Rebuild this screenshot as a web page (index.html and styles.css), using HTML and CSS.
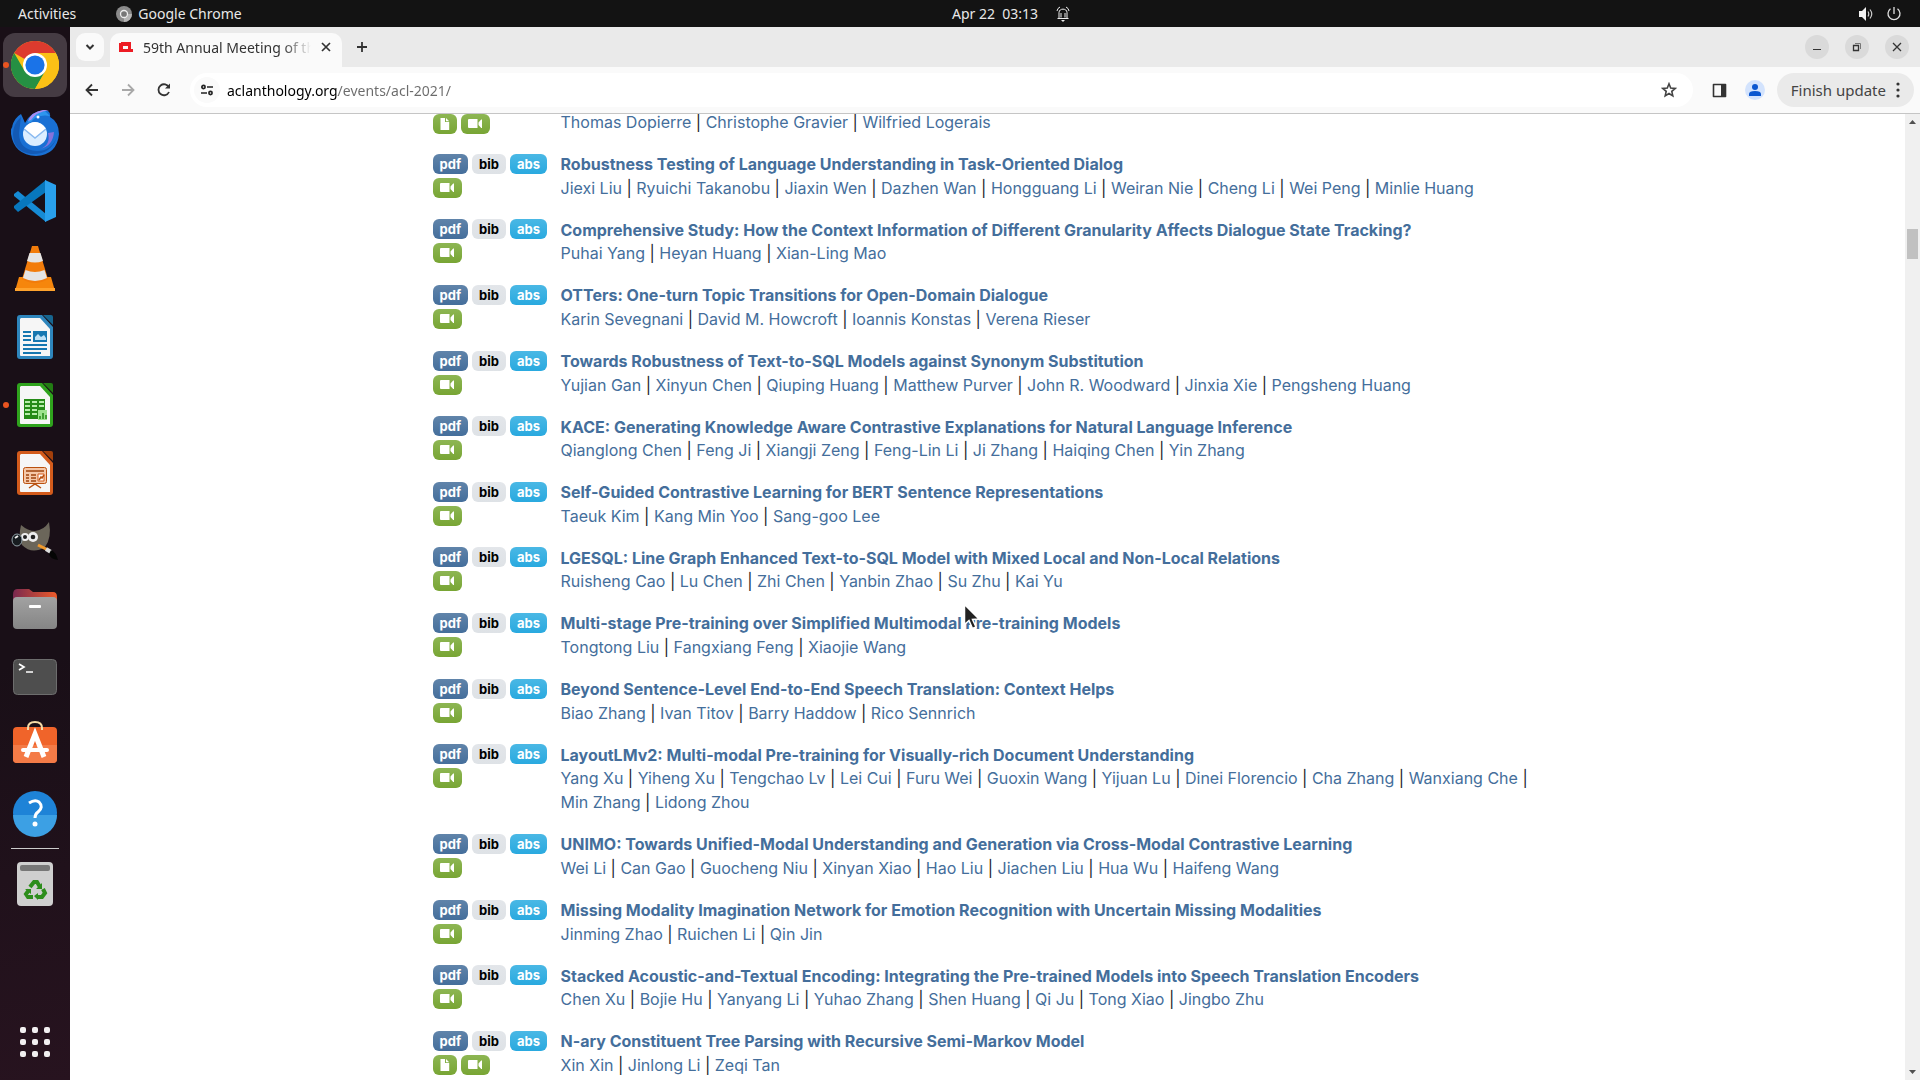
FILE: index.html
```
<!DOCTYPE html>
<html lang="en">
<head>
    <meta charset="UTF-8">
    <meta name="viewport" content="width=device-width, initial-scale=1.0">
    <title>59th Annual Meeting of the Association for Computational Linguistics</title>
    <link rel="stylesheet" href="styles.css">
</head>
<body>
    <!-- shared badge icons -->
    <svg class="defs" aria-hidden="true">
        <symbol id="i-video" viewBox="0 0 15 12">
            <path fill="#fff" d="M1 1h8.500v9H1q-1 0-1-1V2q0-1 1-1zM10.500 4.500l2.700-3h.8v8.500h-.8L10.500 7z"/>
        </symbol>
        <symbol id="i-file" viewBox="0 0 10 12">
            <path fill="#fff" d="M.5 0H5v4h4.200v8H.5zM6 0l3.200 3.200H6z"/>
        </symbol>
    </svg>

    <header class="topbar">
        <div class="topbar-left">
            <span>Activities</span>
            <span class="app-name">
                <svg width="16" height="16" viewBox="0 0 16 16"><circle cx="8" cy="8" r="8" fill="#8b8b8b"/><path d="M8 8h8A8 8 0 0 1 8 16z" fill="#b5b5b5"/><circle cx="8" cy="8" r="3.500" fill="#777" stroke="#eee" stroke-width="1.300"/></svg>
                Google Chrome
            </span>
        </div>
        <div class="topbar-clock">
            <span>Apr 22&nbsp; 03:13</span>
            <svg width="14" height="16" viewBox="0 0 14 16" fill="none" stroke="#eee"><path d="M1.500 12.500h11M3 12V6.500C3 2 11 2 11 6.500V12M5 11.500V7M9 11.500V7M1 5Q1.500 2 4 1M13 5Q12.500 2 10 1"/><path d="M5 14h4l-2 2z" fill="#eee" stroke="none"/></svg>
        </div>
        <div class="topbar-tray">
            <svg width="16" height="16" viewBox="0 0 16 16"><path fill="#f2f2f2" d="M1 5h3l4-4v14l-4-4H1z"/><path fill="none" stroke="#ccc" stroke-width="1.200" d="M10 5.500Q11.500 8 10 10.500M12 3.500Q15.500 8 12 12.500"/></svg>
            <svg width="16" height="16" viewBox="0 0 16 16" fill="none" stroke="#e0e0e0" stroke-width="1.300"><path d="M8 1v7M4.500 2.800a6 6 0 1 0 7 0"/></svg>
        </div>
    </header>

    <div class="desktop">
        <nav class="dock">
            <div class="dock-item active running">
                <svg width="48" height="48" viewBox="0 0 48 48"><circle cx="24" cy="24" r="24" fill="#fbc116"/><path d="M24 24L3.200 12A24 24 0 0 1 44.800 12z" fill="#dd3b2e"/><path d="M24 24L44.800 12H24z" fill="#dd3b2e"/><path d="M3.200 12A24 24 0 0 0 24 48L34.400 30 24 24 13.600 30z" fill="#259043"/><path d="M24 12h20.800A24 24 0 0 1 24 48l10.400-18z" fill="#fbc116"/><circle cx="24" cy="24" r="12" fill="#fff"/><circle cx="24" cy="24" r="9.600" fill="#1a73e8"/></svg>
            </div>
            <div class="dock-item">
                <svg width="48" height="48" viewBox="0 0 48 48"><path d="M1 18Q3 9 10 5Q12 9 14 14Q20 2 34 1Q40 2 39 8Q48 13 48 25Q46 46 25 47Q3 46 0 25Q-1 20 2 17z" fill="#1970d4"/><path d="M2 25Q2 42 20 45Q40 46 46 28Q40 42 26 42Q8 41 8 24L10 8Q2 15 2 25z" fill="#135ab5"/><path d="M16 14Q20 3 34 2L39 7Q26 5 20 13z" fill="#2d96ee"/><path d="M17 12Q20 3 32 1H38Q25 3 20 11z" fill="#a88df0"/><path d="M37 24Q40 36 29 40Q42 37 43 23z" fill="#8573dc"/><ellipse cx="24" cy="25" rx="12" ry="12" fill="#dceeff"/><path d="M13 20l11 9 11-9Q30 13 24 13T13 20z" fill="#fff"/><path d="M13 20l11 9 11-9" fill="none" stroke="#8abaf0" stroke-width="1.500"/><circle cx="27" cy="8" r="1.500" fill="#fff"/></svg>
            </div>
            <div class="dock-item">
                <svg width="48" height="48" viewBox="0 0 48 48"><path d="M3 17l4-3 28 23v8L3 19z" fill="#168bd5"/><path d="M3 31l4 4L35 15V3L3 29z" fill="#0877bd"/><path d="M34 3l11 5v32l-11 5z" fill="#29a0ec"/></svg>
            </div>
            <div class="dock-item">
                <svg width="48" height="48" viewBox="0 0 48 48"><path d="M8 32h32l4 14H4z" fill="#f6860c"/><path d="M4 43h40v3H4z" fill="#ffa32d"/><path d="M21 1h6l10 33q-13 8-26 0z" fill="#f27c0b"/><path d="M18.500 8h11l2.500 8q-8 3-16 0zM14.500 25q9.500 4 19 0l2.500 8q-12 6-24 0z" fill="#e5e5e5"/></svg>
            </div>
            <div class="dock-item">
                <svg width="48" height="48" viewBox="0 0 48 48"><path d="M9 2h22l11 12v29q0 3-3 3H9q-3 0-3-3V5q0-3 3-3z" fill="#2e86bd"/><path d="M10 5h19l10 11v27H10q-1 0-1-1V6z" fill="#f6f6f6"/><path d="M32 2h8q2 0 2 2v8z" fill="#16658f"/><path d="M12 19h8M12 23h8M12 27h8M12 32h24M12 36h24M12 40h18" stroke="#1677b0" stroke-width="2"/><path d="M22 18h14v11H22z" fill="#1677b0"/><path d="M24 27v-3l3-3 3 3 3-2 2 3v2z" fill="#bfe1f5"/></svg>
            </div>
            <div class="dock-item running">
                <svg width="48" height="48" viewBox="0 0 48 48"><path d="M9 2h22l11 12v29q0 3-3 3H9q-3 0-3-3V5q0-3 3-3z" fill="#2fa31d"/><path d="M10 5h19l10 11v27H10q-1 0-1-1V6z" fill="#f6f6f6"/><path d="M32 2h8q2 0 2 2v8z" fill="#227c13"/><path d="M13 18h21v20H13z" fill="#258b17"/><path d="M14 20h5v2h-5zM21 20h5v2h-5zM28 20h5v2h-5zM14 24h5v2h-5zM21 24h5v2h-5zM28 24h5v2h-5zM14 28h5v2h-5zM21 28h5v2h-5zM14 32h5v2h-5zM21 32h5v2h-5z" fill="#b6edaa"/><path d="M27 29h9v10h-9z" fill="#9de38e"/><path d="M29 38v-3M32 38v-6M35 38v-4" stroke="#258b17" stroke-width="1.500"/></svg>
            </div>
            <div class="dock-item">
                <svg width="48" height="48" viewBox="0 0 48 48"><path d="M9 2h22l11 12v29q0 3-3 3H9q-3 0-3-3V5q0-3 3-3z" fill="#d35b1c"/><path d="M10 5h19l10 11v27H10q-1 0-1-1V6z" fill="#f6f6f6"/><path d="M32 2h8q2 0 2 2v8z" fill="#a23f0b"/><rect x="12.500" y="18.500" width="23" height="16" rx="2" fill="#f5c8a9" stroke="#b9500f"/><path d="M15 22h18M15 26h3M15 29h3M15 32h3M20 26h5M20 29h5M20 32h5" stroke="#9e430e" stroke-width="1.500"/><path d="M27 25h6v7h-6z" fill="#fff" stroke="#d35b1c"/><path d="M28 31l2-3 1 1 2-3M24 34v2M18 39l6-4 6 4" fill="none" stroke="#b9500f" stroke-width="1.500"/></svg>
            </div>
            <div class="dock-item">
                <svg width="48" height="48" viewBox="0 0 48 48"><path d="M10 8q7 6 14 6Q33 13 38 5q3 16-4 25-13 8-23-2Q7 20 10 8z" fill="#6b665a"/><circle cx="14" cy="20" r="4" fill="#eee"/><circle cx="22" cy="20" r="5" fill="#eee"/><circle cx="14" cy="20" r="2" fill="#222"/><circle cx="22" cy="20" r="2.300" fill="#222"/><ellipse cx="6" cy="23" rx="5" ry="6" fill="#171c20" stroke="#93a3aa"/><path d="M4 21l3-2" stroke="#eee" stroke-width="2"/><path d="M27 28l10 5" stroke="#f19a2c" stroke-width="3"/><path d="M35 32l5 3" stroke="#ddd" stroke-width="4"/><path d="M40 33q5 2 7 10-8-1-9-6z" fill="#050505"/></svg>
            </div>
            <div class="dock-item">
                <svg width="48" height="48" viewBox="0 0 48 48"><path d="M2 10q0-6 4-6h12l4 3h20q4 0 4 5v8H2z" fill="url(#folder)"/><rect x="2" y="12" width="44" height="32" rx="4" fill="url(#grey)"/><rect x="18" y="20" width="12" height="3" rx="1" fill="#fff"/><defs><linearGradient id="folder"><stop stop-color="#79284f"/><stop offset="1" stop-color="#ed5b2a"/></linearGradient><linearGradient id="grey" x2="0" y2="1"><stop stop-color="#a2a2a2"/><stop offset="1" stop-color="#858585"/></linearGradient></defs></svg>
            </div>
            <div class="dock-item">
                <svg width="48" height="48" viewBox="0 0 48 48"><rect x="2.500" y="6.500" width="43" height="35" rx="4" fill="#4e4e4e" stroke="#6d6d6d"/><path d="M8 11l5 3-5 3M15 19h7" fill="none" stroke="#fff" stroke-width="1.700"/></svg>
            </div>
            <div class="dock-item">
                <svg width="48" height="48" viewBox="0 0 48 48"><rect x="2" y="6" width="44" height="36" rx="4" fill="#f0642a"/><path d="M2 24h44v14q0 4-4 4H6q-4 0-4-4z" fill="#f47b47"/><path d="M17 9V7q0-6 7-6t7 6v2" fill="none" stroke="#f5dba7" stroke-width="2"/><path d="M15 36l9-23 9 23" fill="none" stroke="#fff" stroke-width="5"/><path d="M12 29h24" stroke="#fff" stroke-width="4" stroke-linecap="round"/></svg>
            </div>
            <div class="dock-item">
                <svg width="48" height="48" viewBox="0 0 48 48"><circle cx="24" cy="24" r="22" fill="#1e83d7"/><path d="M2 26h44A22 22 0 0 1 2 26z" fill="#3ca0e4"/><path d="M18 14q6-4 10-1 5 5-1 10-3 2-3 6" fill="none" stroke="#fff" stroke-width="3"/><circle cx="24" cy="35" r="2.500" fill="#fff"/></svg>
            </div>
            <hr class="dock-rule">
            <div class="dock-item">
                <svg width="48" height="48" viewBox="0 0 48 48"><rect x="6" y="2" width="36" height="44" rx="4" fill="#cfcfcf"/><rect x="9" y="5" width="30" height="6" rx="2" fill="#777"/><g fill="none" stroke="#2d8d1c" stroke-width="4"><path d="M19 27l4-5h3l3 5M32 29l2 4-3 4h-5M22 37h-5l-2-3 3-4"/></g><path d="M31 23v6h-6zM27 33v7l-4-4zM14 29h6v5z" fill="#2d8d1c"/></svg>
            </div>
            <button class="dock-item show-apps" aria-label="Show Applications">
                <svg width="32" height="32" viewBox="0 0 32 32" fill="#f2f0f1"><rect x="1" y="1" width="6" height="6" rx="2"/><rect x="13" y="1" width="6" height="6" rx="2"/><rect x="25" y="1" width="6" height="6" rx="2"/><rect x="1" y="13" width="6" height="6" rx="2"/><rect x="13" y="13" width="6" height="6" rx="2"/><rect x="25" y="13" width="6" height="6" rx="2"/><rect x="1" y="25" width="6" height="6" rx="2"/><rect x="13" y="25" width="6" height="6" rx="2"/><rect x="25" y="25" width="6" height="6" rx="2"/></svg>
            </button>
        </nav>

        <div class="window">
            <div class="tabstrip">
                <button class="tab-search" aria-label="Search tabs">
                    <svg width="10" height="10" viewBox="0 0 10 10" fill="none" stroke="#333" stroke-width="2"><path d="M1.500 3L5 6.500 8.500 3"/></svg>
                </button>
                <div class="tab">
                    <svg width="14" height="10" viewBox="0 0 14 10"><path fill="#ed1c24" fill-rule="evenodd" d="M0 1h2V0h10v7h2v3H0zM4 4v3h5V4z"/></svg>
                    <span class="tab-title">59th Annual Meeting of the Association</span>
                    <button class="icon-btn" aria-label="Close tab">
                        <svg width="10" height="10" viewBox="0 0 10 10" stroke="#333" stroke-width="1.700"><path d="M1 1l8 8M9 1L1 9"/></svg>
                    </button>
                </div>
                <button class="icon-btn new-tab" aria-label="New tab">
                    <svg width="12" height="12" viewBox="0 0 12 12" stroke="#333" stroke-width="1.800"><path d="M6 1v10M1 6h10"/></svg>
                </button>
                <div class="window-btns">
                    <button aria-label="Minimize"><svg width="10" height="10" viewBox="0 0 10 10" stroke="#333"><path d="M1 7.500h8"/></svg></button>
                    <button aria-label="Restore"><svg width="10" height="10" viewBox="0 0 10 10" fill="none" stroke="#333"><path d="M1.500 3.500h5v5h-5z" stroke-width="1.300"/><path d="M3 1.500h5.500V7" stroke="#777"/></svg></button>
                    <button aria-label="Close"><svg width="10" height="10" viewBox="0 0 10 10" stroke="#333" stroke-width="1.300"><path d="M1 1l8 8M9 1L1 9"/></svg></button>
                </div>
            </div>

            <div class="toolbar">
                <div class="nav-btns">
                    <button class="icon-btn" aria-label="Back"><svg width="14" height="14" viewBox="0 0 14 14" fill="none" stroke="#333" stroke-width="1.800"><path d="M13 7H2M7 1.500L1.500 7 7 12.500"/></svg></button>
                    <button class="icon-btn" aria-label="Forward" disabled><svg width="14" height="14" viewBox="0 0 14 14" fill="none" stroke="#a8a8a8" stroke-width="1.800"><path d="M1 7h11M7 1.500L12.500 7 7 12.500"/></svg></button>
                    <button class="icon-btn" aria-label="Reload"><svg width="14" height="14" viewBox="0 0 14 14" fill="none" stroke="#333" stroke-width="1.800"><path d="M12 9A5.500 5.500 0 1 1 12 4.500"/><path d="M13 .5v5H8z" fill="#333" stroke="none"/></svg></button>
                </div>
                <div class="omnibox">
                    <button class="site-info" aria-label="View site information"><svg width="12" height="12" viewBox="0 0 12 12" fill="none" stroke="#222" stroke-width="1.700"><circle cx="2.500" cy="3" r="1.600"/><circle cx="9.500" cy="9" r="1.600"/><path d="M6 3h6M0 9h6"/></svg></button>
                    <input class="url" type="text" aria-label="Address and search bar" value="aclanthology.org/events/acl-2021/">
                    <button class="icon-btn" aria-label="Bookmark this tab"><svg width="16" height="16" viewBox="0 0 16 16" fill="none" stroke="#444" stroke-width="1.600"><path d="M8 1.800l1.700 4.200 4.500.4-3.400 3 1 4.500L8 11.500l-3.800 2.400 1-4.500-3.400-3 4.500-.4z"/></svg></button>
                </div>
                <button class="icon-btn side-panel" aria-label="Side panel"><svg width="15" height="15" viewBox="0 0 15 15"><path d="M1.500 1.500h12v12h-12z" fill="none" stroke="#333" stroke-width="1.600" stroke-linejoin="round"/><path d="M9 1h5v13H9z" fill="#333"/></svg></button>
                <button class="profile" aria-label="Profile"><svg width="14" height="14" viewBox="0 0 14 14" fill="#0b57d0"><circle cx="7" cy="4" r="3"/><path d="M1 13v-2q0-3 6-3t6 3v2z"/></svg></button>
                <button class="update">Finish update <svg width="4" height="16" viewBox="0 0 4 16" fill="#333"><circle cx="2" cy="2" r="1.600"/><circle cx="2" cy="8" r="1.600"/><circle cx="2" cy="14" r="1.600"/></svg></button>
            </div>

            <div class="viewport">
                <main class="page">
                    <div class="container">
                        <div class="paper">
                            <div class="links"><a class="badge video" href="#" aria-label="Attachment"><svg width="10" height="12"><use href="#i-file"/></svg></a><a class="badge video" href="#" aria-label="Video"><svg width="15" height="12"><use href="#i-video"/></svg></a></div>
                            <div><a href="#">Thomas Dopierre</a> | <a href="#">Christophe Gravier</a> | <a href="#">Wilfried Logerais</a></div>
                        </div>
                        <div class="paper">
                            <div class="links"><a class="badge pdf" href="#">pdf</a><a class="badge bib" href="#">bib</a><a class="badge abs" href="#">abs</a><br><a class="badge video" href="#" aria-label="Video"><svg width="15" height="12"><use href="#i-video"/></svg></a></div>
                            <div><strong><a href="#">Robustness Testing of Language Understanding in Task-Oriented Dialog</a></strong><br><a href="#">Jiexi Liu</a> | <a href="#">Ryuichi Takanobu</a> | <a href="#">Jiaxin Wen</a> | <a href="#">Dazhen Wan</a> | <a href="#">Hongguang Li</a> | <a href="#">Weiran Nie</a> | <a href="#">Cheng Li</a> | <a href="#">Wei Peng</a> | <a href="#">Minlie Huang</a></div>
                        </div>
                        <div class="paper">
                            <div class="links"><a class="badge pdf" href="#">pdf</a><a class="badge bib" href="#">bib</a><a class="badge abs" href="#">abs</a><br><a class="badge video" href="#" aria-label="Video"><svg width="15" height="12"><use href="#i-video"/></svg></a></div>
                            <div><strong><a href="#">Comprehensive Study: How the Context Information of Different Granularity Affects Dialogue State Tracking?</a></strong><br><a href="#">Puhai Yang</a> | <a href="#">Heyan Huang</a> | <a href="#">Xian-Ling Mao</a></div>
                        </div>
                        <div class="paper">
                            <div class="links"><a class="badge pdf" href="#">pdf</a><a class="badge bib" href="#">bib</a><a class="badge abs" href="#">abs</a><br><a class="badge video" href="#" aria-label="Video"><svg width="15" height="12"><use href="#i-video"/></svg></a></div>
                            <div><strong><a href="#">OTTers: One-turn Topic Transitions for Open-Domain Dialogue</a></strong><br><a href="#">Karin Sevegnani</a> | <a href="#">David M. Howcroft</a> | <a href="#">Ioannis Konstas</a> | <a href="#">Verena Rieser</a></div>
                        </div>
                        <div class="paper">
                            <div class="links"><a class="badge pdf" href="#">pdf</a><a class="badge bib" href="#">bib</a><a class="badge abs" href="#">abs</a><br><a class="badge video" href="#" aria-label="Video"><svg width="15" height="12"><use href="#i-video"/></svg></a></div>
                            <div><strong><a href="#">Towards Robustness of Text-to-SQL Models against Synonym Substitution</a></strong><br><a href="#">Yujian Gan</a> | <a href="#">Xinyun Chen</a> | <a href="#">Qiuping Huang</a> | <a href="#">Matthew Purver</a> | <a href="#">John R. Woodward</a> | <a href="#">Jinxia Xie</a> | <a href="#">Pengsheng Huang</a></div>
                        </div>
                        <div class="paper">
                            <div class="links"><a class="badge pdf" href="#">pdf</a><a class="badge bib" href="#">bib</a><a class="badge abs" href="#">abs</a><br><a class="badge video" href="#" aria-label="Video"><svg width="15" height="12"><use href="#i-video"/></svg></a></div>
                            <div><strong><a href="#">KACE: Generating Knowledge Aware Contrastive Explanations for Natural Language Inference</a></strong><br><a href="#">Qianglong Chen</a> | <a href="#">Feng Ji</a> | <a href="#">Xiangji Zeng</a> | <a href="#">Feng-Lin Li</a> | <a href="#">Ji Zhang</a> | <a href="#">Haiqing Chen</a> | <a href="#">Yin Zhang</a></div>
                        </div>
                        <div class="paper">
                            <div class="links"><a class="badge pdf" href="#">pdf</a><a class="badge bib" href="#">bib</a><a class="badge abs" href="#">abs</a><br><a class="badge video" href="#" aria-label="Video"><svg width="15" height="12"><use href="#i-video"/></svg></a></div>
                            <div><strong><a href="#">Self-Guided Contrastive Learning for BERT Sentence Representations</a></strong><br><a href="#">Taeuk Kim</a> | <a href="#">Kang Min Yoo</a> | <a href="#">Sang-goo Lee</a></div>
                        </div>
                        <div class="paper">
                            <div class="links"><a class="badge pdf" href="#">pdf</a><a class="badge bib" href="#">bib</a><a class="badge abs" href="#">abs</a><br><a class="badge video" href="#" aria-label="Video"><svg width="15" height="12"><use href="#i-video"/></svg></a></div>
                            <div><strong><a href="#">LGESQL: Line Graph Enhanced Text-to-SQL Model with Mixed Local and Non-Local Relations</a></strong><br><a href="#">Ruisheng Cao</a> | <a href="#">Lu Chen</a> | <a href="#">Zhi Chen</a> | <a href="#">Yanbin Zhao</a> | <a href="#">Su Zhu</a> | <a href="#">Kai Yu</a></div>
                        </div>
                        <div class="paper">
                            <div class="links"><a class="badge pdf" href="#">pdf</a><a class="badge bib" href="#">bib</a><a class="badge abs" href="#">abs</a><br><a class="badge video" href="#" aria-label="Video"><svg width="15" height="12"><use href="#i-video"/></svg></a></div>
                            <div><strong><a href="#">Multi-stage Pre-training over Simplified Multimodal Pre-training Models</a></strong><br><a href="#">Tongtong Liu</a> | <a href="#">Fangxiang Feng</a> | <a href="#">Xiaojie Wang</a></div>
                        </div>
                        <div class="paper">
                            <div class="links"><a class="badge pdf" href="#">pdf</a><a class="badge bib" href="#">bib</a><a class="badge abs" href="#">abs</a><br><a class="badge video" href="#" aria-label="Video"><svg width="15" height="12"><use href="#i-video"/></svg></a></div>
                            <div><strong><a href="#">Beyond Sentence-Level End-to-End Speech Translation: Context Helps</a></strong><br><a href="#">Biao Zhang</a> | <a href="#">Ivan Titov</a> | <a href="#">Barry Haddow</a> | <a href="#">Rico Sennrich</a></div>
                        </div>
                        <div class="paper">
                            <div class="links"><a class="badge pdf" href="#">pdf</a><a class="badge bib" href="#">bib</a><a class="badge abs" href="#">abs</a><br><a class="badge video" href="#" aria-label="Video"><svg width="15" height="12"><use href="#i-video"/></svg></a></div>
                            <div><strong><a href="#">LayoutLMv2: Multi-modal Pre-training for Visually-rich Document Understanding</a></strong><br><a href="#">Yang Xu</a> | <a href="#">Yiheng Xu</a> | <a href="#">Tengchao Lv</a> | <a href="#">Lei Cui</a> | <a href="#">Furu Wei</a> | <a href="#">Guoxin Wang</a> | <a href="#">Yijuan Lu</a> | <a href="#">Dinei Florencio</a> | <a href="#">Cha Zhang</a> | <a href="#">Wanxiang Che</a> | <a href="#">Min Zhang</a> | <a href="#">Lidong Zhou</a></div>
                        </div>
                        <div class="paper">
                            <div class="links"><a class="badge pdf" href="#">pdf</a><a class="badge bib" href="#">bib</a><a class="badge abs" href="#">abs</a><br><a class="badge video" href="#" aria-label="Video"><svg width="15" height="12"><use href="#i-video"/></svg></a></div>
                            <div><strong><a href="#">UNIMO: Towards Unified-Modal Understanding and Generation via Cross-Modal Contrastive Learning</a></strong><br><a href="#">Wei Li</a> | <a href="#">Can Gao</a> | <a href="#">Guocheng Niu</a> | <a href="#">Xinyan Xiao</a> | <a href="#">Hao Liu</a> | <a href="#">Jiachen Liu</a> | <a href="#">Hua Wu</a> | <a href="#">Haifeng Wang</a></div>
                        </div>
                        <div class="paper">
                            <div class="links"><a class="badge pdf" href="#">pdf</a><a class="badge bib" href="#">bib</a><a class="badge abs" href="#">abs</a><br><a class="badge video" href="#" aria-label="Video"><svg width="15" height="12"><use href="#i-video"/></svg></a></div>
                            <div><strong><a href="#">Missing Modality Imagination Network for Emotion Recognition with Uncertain Missing Modalities</a></strong><br><a href="#">Jinming Zhao</a> | <a href="#">Ruichen Li</a> | <a href="#">Qin Jin</a></div>
                        </div>
                        <div class="paper">
                            <div class="links"><a class="badge pdf" href="#">pdf</a><a class="badge bib" href="#">bib</a><a class="badge abs" href="#">abs</a><br><a class="badge video" href="#" aria-label="Video"><svg width="15" height="12"><use href="#i-video"/></svg></a></div>
                            <div><strong><a href="#">Stacked Acoustic-and-Textual Encoding: Integrating the Pre-trained Models into Speech Translation Encoders</a></strong><br><a href="#">Chen Xu</a> | <a href="#">Bojie Hu</a> | <a href="#">Yanyang Li</a> | <a href="#">Yuhao Zhang</a> | <a href="#">Shen Huang</a> | <a href="#">Qi Ju</a> | <a href="#">Tong Xiao</a> | <a href="#">Jingbo Zhu</a></div>
                        </div>
                        <div class="paper">
                            <div class="links"><a class="badge pdf" href="#">pdf</a><a class="badge bib" href="#">bib</a><a class="badge abs" href="#">abs</a><br><a class="badge video" href="#" aria-label="Attachment"><svg width="10" height="12"><use href="#i-file"/></svg></a><a class="badge video" href="#" aria-label="Video"><svg width="15" height="12"><use href="#i-video"/></svg></a></div>
                            <div><strong><a href="#">N-ary Constituent Tree Parsing with Recursive Semi-Markov Model</a></strong><br><a href="#">Xin Xin</a> | <a href="#">Jinlong Li</a> | <a href="#">Zeqi Tan</a></div>
                        </div>
                    </div>
                </main>
                <div class="scrollbar">
                    <svg width="15" height="15" viewBox="0 0 15 15"><path d="M4 10h7L7.500 6z" fill="#505050"/></svg>
                    <div class="thumb"></div>
                    <svg width="15" height="15" viewBox="0 0 15 15"><path d="M4 5h7L7.500 9z" fill="#505050"/></svg>
                </div>
            </div>
        </div>
    </div>

    <svg class="pointer" width="18" height="28" viewBox="0 0 18 28"><path d="M1.500 1.500v20l4.500-4 3.500 8 3.500-1.500-3.500-7.500 6.500-.5z" fill="#222" stroke="#fff" stroke-width="1.500"/></svg>
</body>
</html>
```

FILE: styles.css
```
* {
    box-sizing: border-box;
}
body {
    margin: 0;
    height: 100vh;
    display: flex;
    flex-direction: column;
    overflow: hidden;
    font-family: "Noto Sans", sans-serif;
    font-size: 14px;
    background: #1b1018;
}
button {
    border: 0;
    padding: 0;
    background: none;
    font: inherit;
    display: flex;
    align-items: center;
    justify-content: center;
}
svg {
    display: block;
    flex: none;
}
.defs {
    width: 0;
    height: 0;
    position: absolute;
}

/* top bar */
.topbar {
    display: flex;
    align-items: center;
    height: 27px;
    flex: none;
    padding: 0 18px;
    background: #131313;
    color: #e8e8e8;
}
.topbar-left, .topbar-tray {
    flex: 1;
    display: flex;
    align-items: center;
}
.topbar-left {
    gap: 40px;
}
.topbar-tray {
    justify-content: flex-end;
    gap: 12px;
}
.app-name {
    display: flex;
    align-items: center;
    gap: 6px;
}
.topbar-clock {
    display: flex;
    align-items: center;
    gap: 18px;
    padding-left: 102px;
}

/* dock */
.desktop {
    flex: 1;
    min-height: 0;
    display: flex;
}
.dock {
    width: 70px;
    flex: none;
    display: flex;
    flex-direction: column;
    align-items: center;
    gap: 4px;
    padding: 6px 3px;
    background: linear-gradient(170deg, #190f17 60%, #27131f);
}
.dock-item {
    position: relative;
    width: 64px;
    height: 64px;
    flex: none;
    display: flex;
    align-items: center;
    justify-content: center;
    border-radius: 12px;
}
.dock-item.active {
    background: #453b43;
}
.dock-item.running::before {
    content: "";
    position: absolute;
    left: 0;
    top: 29px;
    width: 6px;
    height: 6px;
    border-radius: 50%;
    background: #e95420;
}
.dock-rule {
    width: 48px;
    height: 1px;
    margin: -1px 0 -1px;
    border: 0;
    background: #ccc;
}
.show-apps {
    margin-top: auto;
}

/* browser window */
.window {
    flex: 1;
    min-width: 0;
    display: flex;
    flex-direction: column;
    background: #fff;
    color: #333;
}
.tabstrip {
    display: flex;
    align-items: center;
    height: 40px;
    flex: none;
    padding: 0 11px 0 6px;
    background: #eaeaea;
}
.tab-search {
    width: 28px;
    height: 28px;
    margin-right: 6px;
    border-radius: 9px;
    background: #fafafa;
}
.tab {
    display: flex;
    align-items: center;
    align-self: flex-end;
    gap: 10px;
    width: 232px;
    height: 34px;
    padding: 0 11px 6px 9px;
    border-radius: 10px 10px 0 0;
    background: #fafafa;
}
.tab-title {
    flex: 1;
    overflow: hidden;
    white-space: nowrap;
    mask-image: linear-gradient(to right, #000 140px, transparent 168px);
}
.tab .icon-btn {
    margin-left: -10px;
}
.new-tab {
    margin-left: 14px;
}
.window-btns {
    display: flex;
    gap: 16px;
    margin-left: auto;
}
.window-btns button {
    width: 24px;
    height: 24px;
    border-radius: 50%;
    background: #dadada;
}
.toolbar {
    display: flex;
    align-items: center;
    height: 47px;
    flex: none;
    padding: 0 6px 0 15px;
    background: #fafafa;
    border-bottom: 1px solid #c5c5c5;
}
.nav-btns {
    display: flex;
    gap: 22px;
    margin-right: 19px;
}
.omnibox {
    flex: 1;
    display: flex;
    align-items: center;
    height: 34px;
    padding: 0 16px 0 4px;
    border-radius: 17px;
    background: #fff;
}
.site-info {
    width: 26px;
    height: 26px;
    border-radius: 50%;
    background: #fafafa;
}
.url {
    flex: 1;
    border: 0;
    outline: 0;
    padding: 0 0 0 7px;
    font: inherit;
    /* host in black, path in grey */
    background: linear-gradient(to right, #000 118px, #6b6b6b 118px);
    background-clip: text;
    -webkit-text-fill-color: transparent;
}
.side-panel {
    margin-left: 19px;
}
.profile {
    width: 20px;
    height: 20px;
    margin: 0 12px 0 18px;
    border-radius: 50%;
    background: #d3e3fd;
}
.update {
    gap: 10px;
    height: 34px;
    padding: 0 14px;
    border-radius: 17px;
    background: #eaeaea;
    color: #444;
    font-size: 15px;
}

/* page */
.viewport {
    flex: 1;
    min-height: 0;
    display: flex;
    overflow: hidden;
}
.page {
    flex: 1;
    overflow: hidden;
    font-family: Inter, sans-serif;
    font-size: 16px;
    line-height: 24px;
    color: #212529;
}
.container {
    max-width: 1140px;
    margin: -4px auto 0;
    padding: 0 15px;
}
.container a {
    color: #446e9b;
    text-decoration: none;
}
.paper {
    display: flex;
    margin-bottom: 16px;
}
.paper strong a {
    vertical-align: middle;
}
.links {
    width: 128px;
    flex: none;
    white-space: nowrap;
}
.links .badge {
    display: inline-block;
    vertical-align: middle;
    margin-right: 4px;
    padding: 4px 7px;
    border-radius: 6px;
    font-size: 13px;
    font-weight: 700;
    line-height: 12px;
    color: #fff;
}
.links .pdf {
    background: linear-gradient(#6084aa, #446e9b);
}
.links .bib {
    background: linear-gradient(#e3e6ea, #dee2e6);
    color: #000;
}
.links .abs {
    background: linear-gradient(#4ab8e5, #29a9df);
}
.links .video {
    background: linear-gradient(#8db653, #78a534);
}

.scrollbar {
    width: 15px;
    flex: none;
    display: flex;
    flex-direction: column;
    justify-content: space-between;
    background: #f0f0f0;
}
.thumb {
    width: 11px;
    height: 30px;
    margin: 100px 2px auto;
    background: #c1c1c1;
}

.pointer {
    position: absolute;
    left: 963px;
    top: 603px;
}
```
